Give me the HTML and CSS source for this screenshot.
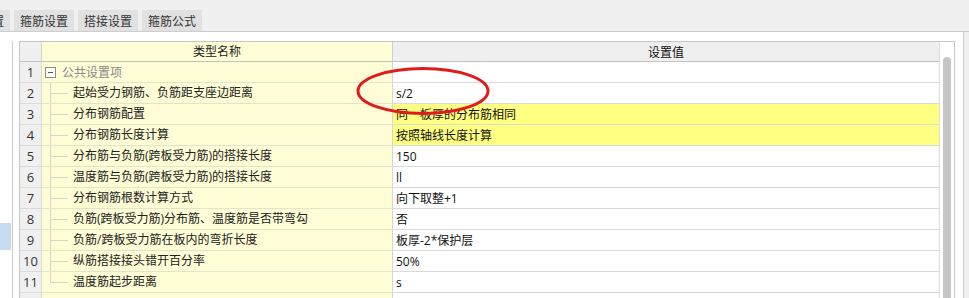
FILE: index.html
```html
<!DOCTYPE html>
<html lang="zh-CN">
<head>
<meta charset="utf-8">
<title>设置</title>
<link rel="stylesheet" href="styles.css">
</head>
<body>
<div class="tabs">
  <div class="tab tab-cut">节点设置</div>
  <div class="tab">箍筋设置</div>
  <div class="tab">搭接设置</div>
  <div class="tab">箍筋公式</div>
</div>
<div class="main">
  <div class="left">
    <div class="left-spacer"></div>
    <div class="left-sel"></div>
  </div>
  <div class="grid-wrap">
    <div class="grid">
      <div class="hd num"></div><div class="hd name">类型名称</div><div class="hd val">设置值</div>

      <div class="num">1</div>
      <div class="name parent"><span class="box"></span><span class="ptext">公共设置项</span></div>
      <div class="val"></div>

      <div class="num">2</div><div class="name"><span class="branch"></span>起始受力钢筋、负筋距支座边距离</div><div class="val">s/2</div>
      <div class="num">3</div><div class="name"><span class="branch"></span>分布钢筋配置</div><div class="val hl">同一板厚的分布筋相同</div>
      <div class="num">4</div><div class="name"><span class="branch"></span>分布钢筋长度计算</div><div class="val hl">按照轴线长度计算</div>
      <div class="num">5</div><div class="name"><span class="branch"></span>分布筋与负筋(跨板受力筋)的搭接长度</div><div class="val">150</div>
      <div class="num">6</div><div class="name"><span class="branch"></span>温度筋与负筋(跨板受力筋)的搭接长度</div><div class="val">ll</div>
      <div class="num">7</div><div class="name"><span class="branch"></span>分布钢筋根数计算方式</div><div class="val">向下取整+1</div>
      <div class="num">8</div><div class="name"><span class="branch"></span>负筋(跨板受力筋)分布筋、温度筋是否带弯勾</div><div class="val">否</div>
      <div class="num">9</div><div class="name"><span class="branch"></span>负筋/跨板受力筋在板内的弯折长度</div><div class="val">板厚-2*保护层</div>
      <div class="num">10</div><div class="name"><span class="branch"></span>纵筋搭接接头错开百分率</div><div class="val">50%</div>
      <div class="num">11</div><div class="name"><span class="branch last"></span>温度筋起步距离</div><div class="val">s</div>

      <div class="num"></div>
      <div class="name parent"><span class="box"></span></div>
      <div class="val"></div>
    </div>
    <div class="vscroll"><div class="thumb"></div></div>
  </div>
</div>
<svg class="mark" width="140" height="54" viewBox="0 0 140 54">
  <ellipse cx="69" cy="25" rx="65" ry="22.5" fill="none" stroke="#e01b1b" stroke-width="3"/>
</svg>
</body>
</html>
```
FILE: styles.css
```css
html, body {
  margin: 0;
  padding: 0;
}
body {
  width: 969px;
  height: 298px;
  overflow: hidden;
  background: #f0f0f0;
  font-family: "Open Sans", "Noto Sans CJK SC", sans-serif;
  font-size: 12px;
  color: #222;
  position: relative;
}
.tabs {
  height: 31px;
  border-bottom: 1px solid #cdcdcd;
  display: flex;
  align-items: flex-end;
  gap: 4px;
  box-sizing: content-box;
}
.tab {
  height: 21px;
  line-height: 21px;
  padding: 0 6px;
  background: #e1e1e1;
  color: #333;
  font-family: "Noto Sans CJK SC", sans-serif;
  white-space: nowrap;
}
.tab-cut {
  margin-left: -50px;
}
.main {
  display: flex;
  width: 964px;
  height: 266px;
  background: #fff;
  border-right: 1px solid #cdcdcd;
  padding-top: 9px;
  box-sizing: border-box;
}
.left {
  width: 12px;
  border-right: 1px solid #cdcdcd;
  flex: none;
}
.left-spacer {
  height: 182px;
}
.left-sel {
  width: 11px;
  height: 27px;
  background: #c7dcf2;
}
.grid-wrap {
  margin-left: 6px;
  width: 936px;
  border: 1px solid #c6c6c6;
  border-bottom: none;
  display: flex;
  box-sizing: border-box;
  height: 260px;
  overflow: hidden;
}
.grid {
  width: 919px;
  display: grid;
  grid-template-columns: 22px 351px 546px;
  grid-auto-rows: 21px;
  grid-template-rows: 20px;
  align-content: start;
}
.grid > div {
  border-right: 1px solid #dadada;
  border-bottom: 1px solid #dadada;
  display: flex;
  align-items: center;
  white-space: nowrap;
  overflow: hidden;
}
.grid > .val {
  border-right: none;
  padding-left: 3px;
  color: #111;
}
.hd {
  background: #efefef;
  justify-content: center;
  color: #333;
  border-bottom-color: #c2c2c2 !important;
  border-right-color: #cfcfcf !important;
}
.grid > .hd.val {
  padding-left: 0;
}
.num {
  background: #f0f0f0;
  justify-content: center;
  color: #333;
  font-size: 13px;
}
.grid > .name {
  background: #fffdd6;
  border-right-color: #d6d6d6;
  border-bottom-color: #e6e4c8;
  align-items: stretch;
  color: #222;
}
.grid > .name.parent {
  align-items: center;
}
.hl {
  background: #ffff82;
}
.box {
  width: 9px;
  height: 9px;
  border: 1px solid #8c8c8c;
  margin-left: 3px;
  margin-right: 6px;
  background: #fff;
  flex: none;
  box-sizing: content-box;
  display: inline-block;
  background-image: linear-gradient(#555, #555);
  background-size: 5px 1px;
  background-position: center;
  background-repeat: no-repeat;
}
.ptext {
  color: #8a8a8a;
}
.branch {
  flex: none;
  width: 18px;
  margin-left: 8px;
  margin-right: 5px;
  margin-bottom: -1px;
  background:
    linear-gradient(#d6d6c8, #d6d6c8) left top / 1px 100% no-repeat,
    linear-gradient(#d6d6c8, #d6d6c8) left center / 100% 1px no-repeat;
}
.branch.last {
  background:
    linear-gradient(#d6d6c8, #d6d6c8) left top / 1px 50% no-repeat,
    linear-gradient(#d6d6c8, #d6d6c8) left center / 100% 1px no-repeat;
}
.name:not(.parent):not(.hd) {
  line-height: 20px;
}
.vscroll {
  width: 15px;
  border-left: 1px solid #dcdcdc;
  box-sizing: border-box;
  padding-top: 15px;
  padding-left: 3px;
  background: #fff;
}
.thumb {
  width: 8px;
  height: 300px;
  background: #c6c6c6;
  border-radius: 4px 4px 0 0;
}
.mark {
  position: absolute;
  left: 354px;
  top: 66px;
}
```
